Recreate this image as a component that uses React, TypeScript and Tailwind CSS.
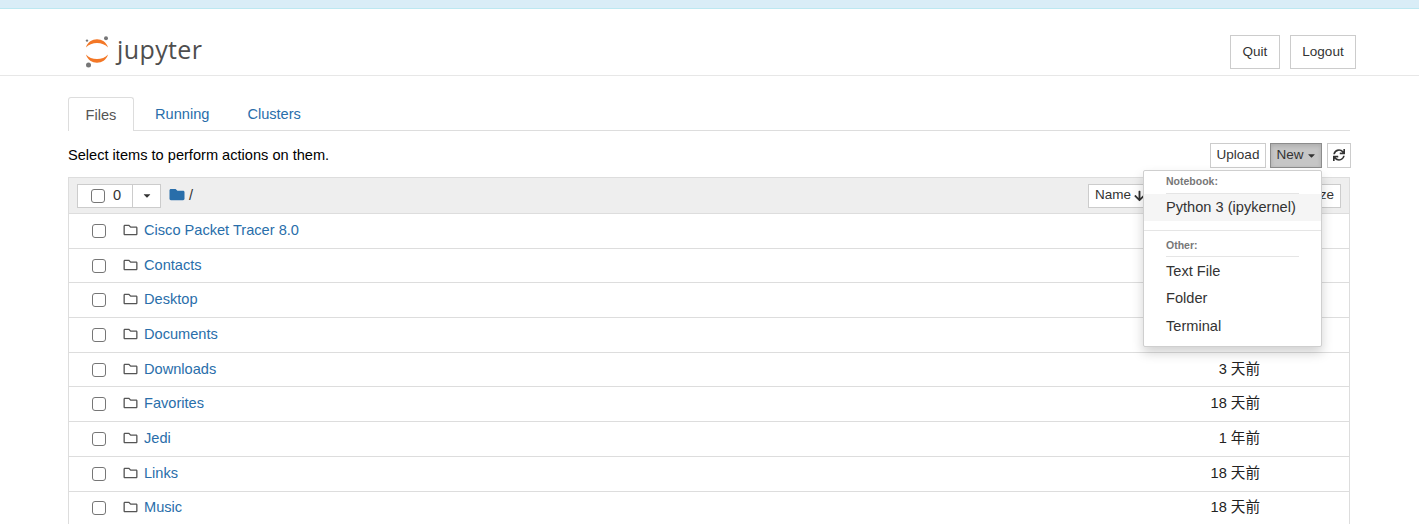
import { FaArrowDown, FaCaretDown, FaFolder, FaRegFolder, FaSync } from 'react-icons/fa';

const rows = [
  { name: 'Cisco Packet Tracer 8.0', date: '' },
  { name: 'Contacts', date: '' },
  { name: 'Desktop', date: '' },
  { name: 'Documents', date: '' },
  { name: 'Downloads', date: '3 天前' },
  { name: 'Favorites', date: '18 天前' },
  { name: 'Jedi', date: '1 年前' },
  { name: 'Links', date: '18 天前' },
  { name: 'Music', date: '18 天前' },
];

const Checkbox = () => (
  <span className="block w-[14px] h-[14px] rounded-[3px] border border-[#767676] bg-white"></span>
);

const NewMenu = () => {
  return (
    <div className="absolute left-[1143px] top-[170px] z-10 w-[179px] h-[177px] bg-white border border-[#cfcfcf] rounded-[2px] shadow-[0_6px_12px_rgba(0,0,0,0.18)] text-[#333] text-[14.6px]">
      <div className="mx-[22px] h-[23px] border-b border-[#e5e5e5] pt-[4px] text-[10.5px] leading-[13px] font-bold text-[#777]">Notebook:</div>
      <div className="h-[27px] pl-[22px] leading-[26px] bg-[#f5f5f5]">Python 3 (ipykernel)</div>
      <div className="h-px mt-[9px] bg-[#e5e5e5]"></div>
      <div className="mx-[22px] h-[26px] border-b border-[#e5e5e5] pt-[8px] text-[10.5px] leading-[13px] font-bold text-[#777]">Other:</div>
      <div className="h-[27px] pl-[22px] leading-[29px]">Text File</div>
      <div className="h-[28px] pl-[22px] leading-[29px]">Folder</div>
      <div className="h-[27px] pl-[22px] leading-[29px]">Terminal</div>
    </div>
  );
};

const App = () => {
  return (
    <div className="relative h-[524px] overflow-hidden bg-white text-[14.6px] text-black font-['Liberation_Sans','Noto_Sans_CJK_SC',sans-serif]">
      <div className="h-[9px] bg-[#d9edf7] border-b border-[#bce8f1]"></div>

      <header className="h-[67px] border-b border-[#e7e7e7] pl-[85px] pr-[63px] flex items-start justify-between">
        <div className="flex items-center gap-[8px] mt-[27px]">
          <svg width="24" height="32" viewBox="0 0 24 32" className="shrink-0">
            <circle cx="21" cy="2.2" r="2" fill="#767677" />
            <circle cx="2" cy="4.6" r="1.2" fill="#767677" />
            <circle cx="3.5" cy="29" r="2.5" fill="#767677" />
            <path d="M1 11.5 C4 0.5 20 0.5 23 11.5 C18 5.5 6 5.5 1 11.5 Z" fill="#f37726" />
            <path d="M1 18.5 C6 24.5 18 24.5 23 18.5 C20 29.5 4 29.5 1 18.5 Z" fill="#f37726" />
          </svg>
          <span className="mb-[6px] font-['Open_Sans',sans-serif] text-[25px] leading-none text-[#4e4e4e] tracking-[0.4px]">jupyter</span>
        </div>
        <div className="flex gap-[10px] mt-[26px] text-[13.5px] text-[#333]">
          <button className="h-[34px] w-[50px] border border-[#ccc]">Quit</button>
          <button className="h-[34px] w-[66px] border border-[#ccc]">Logout</button>
        </div>
      </header>

      <main className="ml-[68px] w-[1282px] pt-[21px]">
        <nav className="flex h-[34px] border-b border-[#ddd]">
          <div className="h-[34px] w-[66px] pt-[2px] border border-b-0 border-[#ddd] rounded-t-[3px] bg-white text-[#555] flex items-center justify-center">Files</div>
          <div className="h-[33px] pt-[2px] px-[19px] ml-[2px] flex items-center text-[#296eaa]">Running</div>
          <div className="h-[33px] pt-[2px] px-[19px] flex items-center text-[#296eaa]">Clusters</div>
        </nav>

        <div className="h-[46px] flex items-center justify-between">
          <span className="mt-[4px]">Select items to perform actions on them.</span>
          <div className="flex items-center mr-[-1px] mt-[2px] text-[#333] text-[13.5px]">
            <button className="h-[25px] w-[56px] border border-[#ccc]">Upload</button>
            <button className="h-[25px] w-[52px] ml-[4px] border border-[#8c8c8c] bg-[#c6c6c6] shadow-[inset_0_2px_4px_rgba(0,0,0,0.13)] flex items-center justify-center gap-[3px]">
              New <FaCaretDown className="w-[9px] h-[11px]" />
            </button>
            <button className="h-[25px] w-[24px] ml-[5px] border border-[#ccc] flex items-center justify-center">
              <FaSync className="w-[12px] h-[12px]" />
            </button>
          </div>
        </div>

        <section className="border border-[#ddd] border-b-0">
          <div className="h-[36px] bg-[#eeeeee] border-b border-[#ddd] flex items-center justify-between px-[8px]">
            <div className="flex items-center">
              <div className="h-[24px] w-[84px] bg-white border border-[#ccc] flex items-center text-[#333]">
                <div className="h-full w-[55px] pl-[13px] flex items-center gap-[8px] border-r border-[#ccc]">
                  <Checkbox />
                  <span>0</span>
                </div>
                <div className="flex-1 flex items-center justify-center">
                  <FaCaretDown className="w-[10px] h-[11px]" />
                </div>
              </div>
              <FaFolder className="ml-[8px] w-[16px] h-[15px] mb-[2px] text-[#296eaa]" />
              <span className="ml-[4px] text-[#333]">/</span>
            </div>
            <div className="flex items-center justify-between h-[24px] w-[253px] px-[6px] border border-[#ccc] bg-white text-[#333] text-[13.5px]">
              <span className="flex items-center">Name <FaArrowDown className="w-[11px] h-[12px] ml-[3px]" /></span>
              <span>Size</span>
            </div>
          </div>

          {rows.map((row) => (
            <div key={row.name} className="h-[34.7px] border-b border-[#ddd] flex items-center pl-[23px] pr-[89px]">
              <Checkbox />
              <FaRegFolder className="ml-[17px] w-[15px] h-[14px] mb-[2px] text-[#555]" />
              <a className="ml-[6px] text-[#296eaa]">{row.name}</a>
              <span className="ml-auto text-[#222]">{row.date}</span>
            </div>
          ))}
        </section>
      </main>

      <NewMenu />
    </div>
  );
};

export default App;
